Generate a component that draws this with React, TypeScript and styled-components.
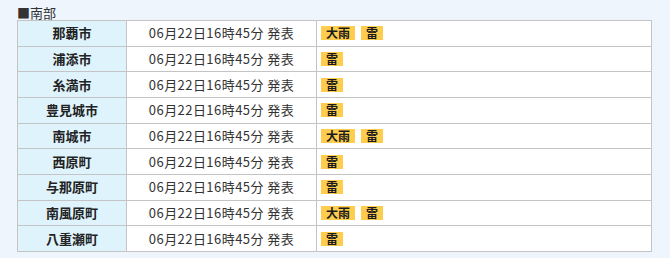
import styled, { createGlobalStyle } from 'styled-components'

const GlobalStyle = createGlobalStyle`
	body {
		margin: 0;
		background: #eef5fd;
		font-family: "Noto Sans CJK JP", "Noto Sans", sans-serif;
		color: #333;
	}
`

const Page = styled.div`
	width: 670px;
	height: 258px;
	padding: 5px 18px 0 17px;
	box-sizing: border-box;
`

const Heading = styled.div`
	font-size: 13px;
	line-height: 15px;
	color: #333;
`

const Table = styled.table`
	width: 635px;
	border-collapse: collapse;
	background: #fff;
	table-layout: fixed;
`

const Cell = styled.td`
	border: 1px solid #c4c4c4;
	height: 24.67px;
	padding: 0;
	font-size: 13px;
	line-height: 16px;
	text-align: center;
	color: #333;
`

const NameCell = styled(Cell)`
	width: 108px;
	background: #dff3fc;
	font-weight: bold;
	color: #222;
`

const DateCell = styled(Cell)`
	width: 189px;
	letter-spacing: 0.45px;
`

const WarnCell = styled(Cell)`
	text-align: left;
	padding-left: 4px;
`

const Badges = styled.div`
	display: flex;
	gap: 6px;
`

const Badge = styled.span`
	background: #fecd4e;
	color: #1a1a1a;
	font-size: 12px;
	font-weight: bold;
	line-height: 14px;
	padding: 0 5px;
`

const rows = [
	{ name: '那覇市', warns: ['大雨', '雷'] },
	{ name: '浦添市', warns: ['雷'] },
	{ name: '糸満市', warns: ['雷'] },
	{ name: '豊見城市', warns: ['雷'] },
	{ name: '南城市', warns: ['大雨', '雷'] },
	{ name: '西原町', warns: ['雷'] },
	{ name: '与那原町', warns: ['雷'] },
	{ name: '南風原町', warns: ['大雨', '雷'] },
	{ name: '八重瀬町', warns: ['雷'] },
]

const App = () => {
	return (
		<Page>
			<GlobalStyle />
			<Heading>■南部</Heading>
			<Table>
				<tbody>
					{rows.map((row) => (
						<tr key={row.name}>
							<NameCell>{row.name}</NameCell>
							<DateCell>06月22日16時45分 発表</DateCell>
							<WarnCell>
								<Badges>
									{row.warns.map((w) => (
										<Badge key={w}>{w}</Badge>
									))}
								</Badges>
							</WarnCell>
						</tr>
					))}
				</tbody>
			</Table>
		</Page>
	)
}

export default App
